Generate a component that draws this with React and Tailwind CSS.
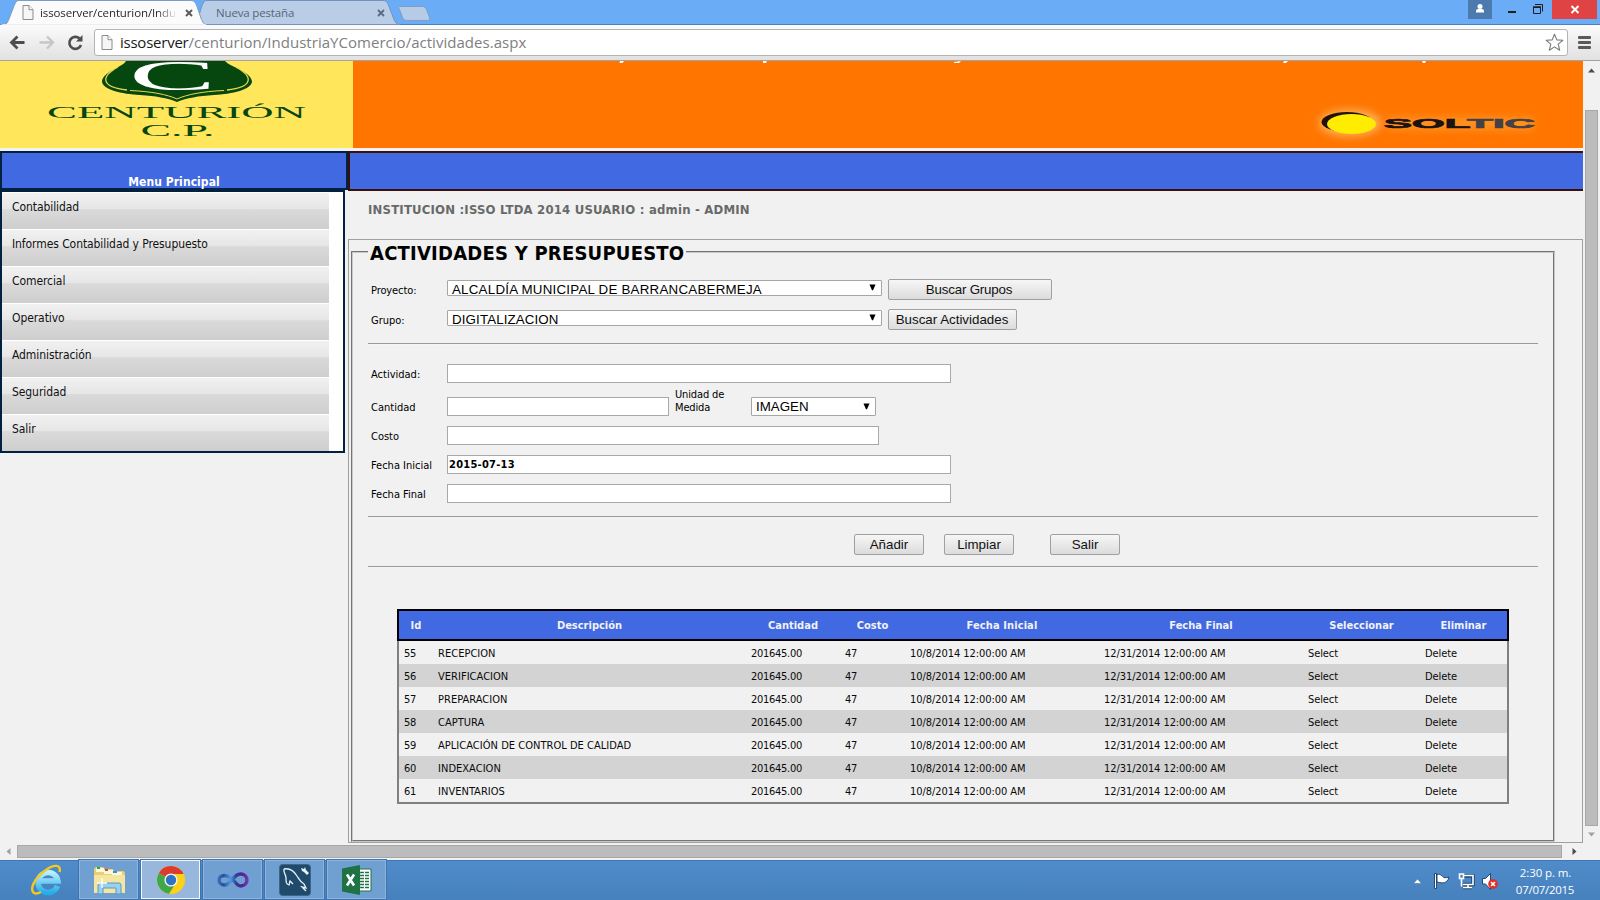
const menu = [
  "Contabilidad",
  "Informes Contabilidad y Presupuesto",
  "Comercial",
  "Operativo",
  "Administración",
  "Seguridad",
  "Salir",
];

const rows = [
  [55, "RECEPCION"],
  [56, "VERIFICACION"],
  [57, "PREPARACION"],
  [58, "CAPTURA"],
  [59, "APLICACIÓN DE CONTROL DE CALIDAD"],
  [60, "INDEXACION"],
  [61, "INVENTARIOS"],
];

const GRID = "grid grid-cols-[34px_313px_94px_65px_194px_204px_117px_87px]";

function PageIcon({ className }) {
  return (
    <svg className={className} width="12" height="15" viewBox="0 0 12 15">
      <path d="M1 .5h6l4 4.2v9.8H1z" fill="#f6f6f6" stroke="#8c8c8c" />
      <path d="M7 .5v4.2h4" fill="#fff" stroke="#8c8c8c" />
    </svg>
  );
}

function TabStrip() {
  return (
    <div className="relative h-[25px] bg-[#6aacf6]">
      <svg className="absolute inset-0" width="1600" height="25" viewBox="0 0 1600 25">
        <path d="M0 24.500h1600" stroke="#4a7fc0" />
        <path d="M190 24.500c6 0 6-2 8-6l4-13c2-4 2-5 5-5h175c4 0 5 1 7 6l5 13c2 4 3 5 6 5z" fill="#bacde6" stroke="#7292bd" />
        <path d="M399.500 6.500h23c2 0 3 1 4 3l3 8c0 2 0 3-2 3h-21c-2 0-3-1-4-3l-3-8c-1-2-1-3 0-3z" fill="#b5cbe6" stroke="#7f9cc2" />
        <path d="M0 25c6 0 7-1 9-6l5-13c2-5 3-5.500 6-5.500h170c4 0 5 1 7 6l4.500 13c2 4 3 5.500 6 5.500z" fill="#fbfbfb" stroke="#7b9cc6" />
        <path d="M2 25h204" stroke="#fbfbfb" strokeWidth="1.500" />
        <path d="M186 10l6 6m0-6l-6 6" stroke="#5a5a5a" strokeWidth="2" />
        <path d="M378 10l6 6m0-6l-6 6" stroke="#5b6a80" strokeWidth="1.800" />
        <path d="M1468 0h24v19h-24z" fill="#4b7aae" />
        <circle cx="1480" cy="6.500" r="2.500" fill="#fff" />
        <path d="M1476 12.500v-1.500q0-2 2-2h4q2 0 2 2v1.500z" fill="#fff" />
        <path d="M1508 11h8v2h-8z" fill="#1e1e1e" />
        <path d="M1533.500 7.500h7v6h-7z" fill="none" stroke="#1e1e1e" />
        <path d="M1533 7h8" stroke="#1e1e1e" strokeWidth="1.500" />
        <path d="M1535 4.500h7.500v7" fill="none" stroke="#1e1e1e" />
        <path d="M1552 0h45v19h-45z" fill="#e04343" />
        <path d="M1571.500 6l7 7m0-7l-7 7" stroke="#fff" strokeWidth="1.900" />
      </svg>
      <div className="relative flex h-[25px] items-center font-['Open_Sans',sans-serif] text-[11.5px]">
        <PageIcon className="ml-[22px]" />
        <span className="ml-[6px] w-[137px] overflow-hidden whitespace-nowrap bg-linear-to-r from-[#222] from-85% to-transparent bg-clip-text tracking-[-0.12px] text-transparent">
          issoserver/centurion/Indus
        </span>
        <span className="ml-[39px] tracking-[-0.16px] text-[#56657a]">Nueva pestaña</span>
      </div>
    </div>
  );
}

function Toolbar() {
  return (
    <div className="flex h-[36px] items-center border-b border-[#a3a3a3] bg-linear-to-b from-[#fbfbfb] to-[#e1e1e1]">
      <svg width="94" height="35" viewBox="0 0 94 35">
        <g fill="none" strokeWidth="2.800">
          <path d="M24.500 17.500H12M17.500 11.500l-6 6 6 6" stroke="#4d4d4d" />
          <path d="M39.500 17.500h13M47 11.500l6 6-6 6" stroke="#c6c6c6" strokeWidth="2.400" />
          <path d="M81 20a6 6 0 1 1-1.500-6.500" stroke="#4d4d4d" strokeWidth="2.600" />
        </g>
        <path d="M82.500 10v6.500H76z" fill="#4d4d4d" />
      </svg>
      <div className="mb-px flex h-[27px] w-[1474px] items-center rounded-[3px] border border-[#b4b4b4] bg-white">
        <PageIcon className="ml-[6px]" />
        <div className="ml-[7px] flex-1 font-['Open_Sans',sans-serif] text-[15px] leading-[24px]">
          <span className="tracking-[-0.24px] text-[#1a1a1a]">issoserver</span>
          <span className="tracking-[0.03px] text-[#808080]">/centurion/IndustriaYComercio/actividades.aspx</span>
        </div>
        <svg className="mr-[3px]" width="19" height="19" viewBox="0 0 19 19">
          <path d="M9.500 1.200l2.300 5.700 6 .4-4.600 3.900 1.500 6-5.200-3.300-5.200 3.300 1.500-6L1.200 7.300l6-.4z" fill="#fff" stroke="#7a7a7a" strokeWidth="1.100" strokeLinejoin="round" />
        </svg>
      </div>
      <div className="ml-[10px] flex flex-col gap-[2px]">
        <div className="h-[3px] w-[13px] rounded-[1px] bg-[#5a5a5a]" />
        <div className="h-[3px] w-[13px] rounded-[1px] bg-[#5a5a5a]" />
        <div className="h-[3px] w-[13px] rounded-[1px] bg-[#5a5a5a]" />
      </div>
    </div>
  );
}

function Banner() {
  return (
    <div className="flex h-[87px]">
      <svg className="bg-[#ffe65a]" width="353" height="87" viewBox="0 0 353 87">
        <path d="M126 0C123 6 104 10 102 20c0 9 20 13 38 14 16 1 27 3 37 7 10-4 21-6 37-7 18-1 38-5 38-14-2-10-22-14-27-20z" fill="#06470f" />
        <path d="M118 6c-18 10-17 20 9 23M236 6c18 10 17 20-9 23" fill="none" stroke="#e6d850" strokeWidth="1.300" />
        <path d="M130 29.500c22 1 37 4 47 8.500 10-4.500 25-7.500 47-8.500" fill="none" stroke="#e6d850" strokeWidth="1" />
        <text x="129" y="28.500" textLength="87" lengthAdjust="spacingAndGlyphs" className="fill-white font-['Liberation_Serif',serif] text-[43px]">C</text>
        <text x="47" y="57" textLength="259" lengthAdjust="spacingAndGlyphs" className="fill-[#06470f] font-['Liberation_Serif',serif] text-[17px]">CENTURIÓN</text>
        <text x="140.500" y="75" textLength="74" lengthAdjust="spacingAndGlyphs" className="fill-[#06470f] font-['Liberation_Serif',serif] text-[16.5px]">C.P.</text>
      </svg>
      <svg className="bg-[#ff7500]" width="1230" height="87" viewBox="353 0 1230 87">
        <defs>
          <filter id="glow" x="-30%" y="-80%" width="160%" height="260%">
            <feGaussianBlur stdDeviation="4" />
          </filter>
        </defs>
        <g fill="#fff">
          <path d="M620 0h4l-1.500 2h-3zM763 0h4l-1 2h-3zM954 1l7-1-2 2h-5zM1284 0h4l-2 2h-3zM1422 0h4l-1 2h-2z" />
        </g>
        <g filter="url(#glow)">
          <ellipse cx="1350" cy="62" rx="31" ry="13" fill="#ffb45c" />
          <path d="M1388 57h145v11h-145z" fill="#ff9526" />
        </g>
        <ellipse cx="1347" cy="61" rx="25.500" ry="10" fill="#21130a" />
        <ellipse cx="1351.500" cy="63" rx="24.500" ry="10" fill="#ffec00" />
        <text x="1384" y="67.300" textLength="151" lengthAdjust="spacingAndGlyphs" className="fill-[#1c1310] stroke-[#1c1310] stroke-[0.7] font-['Liberation_Sans',sans-serif] text-[13px] font-bold">
          SOL<tspan className="fill-[#444044] stroke-[#444044]">TIC</tspan>
        </text>
      </svg>
    </div>
  );
}

function SideMenu() {
  return (
    <div className="w-[348px] shrink-0">
      <div className="flex h-[39px] items-end justify-center border-2 border-[#00213f] bg-[#4169e1] text-[12px] leading-[11px] font-bold tracking-[0.06px] text-white">
        Menu Principal
      </div>
      <div className="h-[263px] w-[345px] border-2 border-[#00213f] bg-white">
        {menu.map((m) => (
          <div
            key={m}
            className="h-[37px] w-[327px] border-t border-white bg-linear-[180deg,#f1f1f1_0%,#e6e6e6_45%,#dadada_46%,#cecece_100%] pt-[7px] pl-[10px] text-[12px] leading-[15px] tracking-[-0.08px] text-[#111]"
          >
            {m}
          </div>
        ))}
      </div>
    </div>
  );
}

function Select({ className, textClass = "", children }) {
  return (
    <div className={`flex items-center justify-between rounded-[1px] border border-[#a6a6a6] bg-white pr-[5px] pl-[4px] font-['Liberation_Sans',sans-serif] text-[13.33px] leading-[15px] whitespace-nowrap text-black ${className}`}>
      <span className={textClass}>{children}</span>
      <svg className="-mt-px" width="7" height="7" viewBox="0 0 7 7">
        <path d="M.5 .5h6L4 6.300H3z" fill="#000" />
      </svg>
    </div>
  );
}

function Button({ className, children }) {
  return (
    <button className={`flex h-[21px] items-center justify-center rounded-[2px] border border-[#a0a0a0] bg-linear-to-b from-[#f6f6f6] to-[#dcdcdc] font-['Liberation_Sans',sans-serif] text-[13.33px] leading-none whitespace-nowrap text-[#111] ${className}`}>
      {children}
    </button>
  );
}

function Field({ className, children }) {
  return <div className={`h-[19px] border border-[#a9a9a9] bg-white pl-px text-[11px] leading-[18px] font-bold tracking-[0.25px] ${className}`}>{children}</div>;
}

function Label({ className, children }) {
  return <div className={`w-[79px] shrink-0 pl-[3px] text-[11px] leading-[13px] ${className}`}>{children}</div>;
}

function Rule({ className }) {
  return <div className={`h-[2px] border-t border-b border-t-[#9a9a9a] border-b-[#f4f4f4] ${className}`} />;
}

function Form() {
  return (
    <fieldset className="ml-[2px] h-[602px] w-[1204px] border-2 border-[#c8c8c8] px-[15px] [border-style:groove]">
      <legend className="h-[24px] px-[2px] text-[20px] leading-[26px] font-bold tracking-[0.22px] whitespace-nowrap text-black">
        ACTIVIDADES Y PRESUPUESTO
      </legend>
      <div className="mt-[15px] flex h-[21px]">
        <Label className="pt-[5px] tracking-[-0.1px]">Proyecto:</Label>
        <Select className="mt-px h-[16px] w-[435px] tracking-[0.23px]" textClass="pt-[3px]">ALCALDÍA MUNICIPAL DE BARRANCABERMEJA</Select>
        <Button className="ml-[6px] w-[164px] pr-[2px] tracking-[-0.2px]">Buscar Grupos</Button>
      </div>
      <div className="mt-[9px] flex h-[21px]">
        <Label className="pt-[5px]">Grupo:</Label>
        <Select className="mt-px h-[16px] w-[435px] tracking-[0.12px]" textClass="pt-[3px]">DIGITALIZACION</Select>
        <Button className="ml-[6px] w-[129px] pr-px">Buscar Actividades</Button>
      </div>
      <Rule className="mt-[13px]" />
      <div className="mt-[19px] flex h-[19px]">
        <Label className="pt-[4px]">Actividad:</Label>
        <Field className="w-[504px]" />
      </div>
      <div className="mt-[14px] flex h-[19px]">
        <Label className="pt-[4px]">Cantidad</Label>
        <Field className="w-[222px]" />
        <div className="-mt-[9px] w-[82px] pl-[6px] text-[11px] leading-[13px] tracking-[-0.14px]">
          Unidad de
          <br />
          Medida
        </div>
        <Select className="h-[19px] w-[125px]">IMAGEN</Select>
      </div>
      <div className="mt-[10px] flex h-[19px]">
        <Label className="pt-[4px]">Costo</Label>
        <Field className="w-[432px]" />
      </div>
      <div className="mt-[10px] flex h-[19px]">
        <Label className="pt-[4px]">Fecha Inicial</Label>
        <Field className="w-[504px]">2015-07-13</Field>
      </div>
      <div className="mt-[10px] flex h-[19px]">
        <Label className="pt-[4px]">Fecha Final</Label>
        <Field className="w-[504px]" />
      </div>
      <Rule className="mt-[13px]" />
      <div className="mt-[16px] ml-[486px] flex">
        <Button className="w-[70px]">Añadir</Button>
        <Button className="ml-[20px] w-[70px]">Limpiar</Button>
        <Button className="ml-[36px] w-[70px]">Salir</Button>
      </div>
      <Rule className="mt-[11px]" />
      <div className="mt-[41px] ml-[29px] w-[1112px] text-[11px]">
        <div className={`${GRID} h-[32px] border-2 border-black bg-[#4169e1] pt-px text-center leading-[28px] font-bold text-[#f2f2f2]`}>
          <span>Id</span>
          <span>Descripción</span>
          <span>Cantidad</span>
          <span>Costo</span>
          <span className="tracking-[0.1px]">Fecha Inicial</span>
          <span>Fecha Final</span>
          <span>Seleccionar</span>
          <span>Eliminar</span>
        </div>
        <div className="border-2 border-t-0 border-[#808080]">
          {rows.map(([id, name]) => (
            <div key={id} className={`${GRID} h-[23px] pt-px leading-[24px] text-[#0a0a0a] even:bg-[#d3d3d3] [&>span]:pl-[5px]`}>
              <span className="tracking-[-0.3px]">{id}</span>
              <span className="tracking-[0.03px]">{name}</span>
              <span className="tracking-[-0.28px]">201645.00</span>
              <span className="tracking-[-0.3px]">47</span>
              <span className="tracking-[-0.06px]">10/8/2014 12:00:00 AM</span>
              <span className="tracking-[-0.07px]">12/31/2014 12:00:00 AM</span>
              <span className="tracking-[-0.09px]">Select</span>
              <span className="tracking-[-0.09px]">Delete</span>
            </div>
          ))}
        </div>
      </div>
    </fieldset>
  );
}

function TaskButton({ className, children }) {
  return <div className={`mr-[3px] flex h-[39px] w-[59px] shrink-0 items-center justify-center border outline outline-[#3f74ae] ${className}`}>{children}</div>;
}

function Taskbar() {
  return (
    <div className="flex h-[40px] items-start bg-linear-to-b from-[#4f8cca] to-[#4681bd] text-white shadow-[inset_0_1px_0_#3f76b0]">
      <div className="flex w-[79px] justify-center pl-[14px]">
        <svg className="mt-[3px]" width="34" height="34" viewBox="0 0 34 34">
          <defs>
            <linearGradient id="ie" x1="0" y1="0" x2="0" y2="1">
              <stop offset="0" stopColor="#b9f0ff" />
              <stop offset="1" stopColor="#25aee8" />
            </linearGradient>
          </defs>
          <path d="M27.500 23A10 10 0 1 1 28 18H11" fill="none" stroke="url(#ie)" strokeWidth="5.500" />
          <path d="M29.500 9c2-8-6-8-15-1C5 15-1 26 4 30c2 1 5 0 7-1" fill="none" stroke="#f5c820" strokeWidth="2.400" />
        </svg>
      </div>
      <TaskButton className="border-[#8db4de] bg-[#709fd2]">
        <svg width="34" height="30" viewBox="0 0 34 30">
          <path d="M2 5q0-3 3-3h6l2 2h8l1 2h9q2 0 2 2v20H2z" fill="#e8cf74" />
          <path d="M4 3h8v4H4z" fill="#fff8d8" />
          <path d="M5 2h3v2H5z" fill="#1ab53c" />
          <path d="M12 5h9v4h-9z" fill="#fff8d8" />
          <path d="M13 4h3v2h-3z" fill="#e04428" />
          <path d="M20 7h10v4H20z" fill="#fff8d8" />
          <path d="M21 6h4v2h-4z" fill="#2593e8" />
          <path d="M2 10h31v18H2z" fill="#f6e59e" />
          <path d="M6 29V20q0-2 2-2h19q2 0 2 2v9h-5v-6H11v6z" fill="#9ad0ee" stroke="#4f9dcb" />
          <path d="M10 13v10M5 18h10" stroke="#fff" strokeWidth="1.300" />
        </svg>
      </TaskButton>
      <TaskButton className="border-[#f2f7fc] bg-[#97b7dd]">
        <svg width="28" height="28" viewBox="0 0 28 28">
          <circle cx="14" cy="14" r="14" fill="#fcd116" />
          <path d="M14 14L1.880 7A14 14 0 0 0 12 27.850L19.500 16z" fill="#3ea84b" />
          <path d="M14 14L1.880 7A14 14 0 0 1 26.600 8H14z" fill="#de3b2f" />
          <circle cx="14" cy="14" r="6.600" fill="#f3f3f3" />
          <circle cx="14" cy="14" r="5.200" fill="#2f74c4" />
        </svg>
      </TaskButton>
      <TaskButton className="border-[#8db4de] bg-[#709fd2]">
        <svg width="32" height="18" viewBox="0 0 32 18">
          <defs>
            <linearGradient id="vs" gradientUnits="userSpaceOnUse" x1="0" x2="32" y1="0" y2="0">
              <stop offset="0" stopColor="#3d78c8" />
              <stop offset=".2" stopColor="#2a4f9c" />
              <stop offset=".42" stopColor="#4f9be0" />
              <stop offset=".6" stopColor="#2d3f94" />
              <stop offset=".8" stopColor="#5a1f9a" />
              <stop offset="1" stopColor="#6a45b0" />
            </linearGradient>
          </defs>
          <path d="M17 10C13 6 11 4.500 7.500 4.500 4.500 4.500 2 6.300 2 9s2.500 5 5.500 5C14 14 16 3 23.500 3c3.700 0 6.500 2.500 6.500 6s-2.800 6-6.500 6c-2.500 0-4.500-2.500-6.500-5z" fill="none" stroke="url(#vs)" strokeWidth="3.500" />
        </svg>
      </TaskButton>
      <TaskButton className="border-[#8db4de] bg-[#709fd2]">
        <svg width="32" height="32" viewBox="0 0 32 32">
          <rect x=".5" y=".5" width="31" height="31" rx="3" fill="#1f4a6c" stroke="#3d6685" />
          <path d="M5 5c5-1 10 2 13 7 2 3 3 6 7 8l2 4-4-1 4 4M5 5c-1 4 2 5 2 9s0 6 3 7c1-1 0-3 1-4l3 3" fill="none" stroke="#e8f1f7" strokeWidth="1.300" />
          <path d="M22 4l1 3 2 1 3 3 2-2-3-3-1-3-1 2z" fill="#e8f1f7" />
        </svg>
      </TaskButton>
      <TaskButton className="border-[#8db4de] bg-[#709fd2]">
        <svg width="30" height="30" viewBox="0 0 30 30">
          <path d="M16 4h13v22H16z" fill="#fff" stroke="#1f7244" />
          <path d="M18 7.500h9M18 10.500h9M18 13.500h9M18 16.500h9M18 19.500h9M18 22.500h9" stroke="#1f7244" strokeWidth="1.500" />
          <path d="M22.500 5v20" stroke="#fff" />
          <path d="M0 3.500L18 0v30L0 26.500z" fill="#1f7244" />
          <path d="M5 9.500l7 11M12 9.500l-7 11" stroke="#fff" strokeWidth="2.600" />
        </svg>
      </TaskButton>
      <svg className="ml-auto" width="92" height="40" viewBox="1412 0 92 40">
        <path d="M1413.500 23.500l4-4.500 4 4.500z" fill="#fff" stroke="#3b6a9c" strokeWidth=".5" />
        <g stroke="#23476d" strokeWidth="1" fill="#fff">
          <path d="M1434.500 13.500h2v15h-2z" />
          <path d="M1437 14.500c4-1 5 2 7 3 1 .5 4 0 5-.5-1 4-3 6-7 6-2 0-3-1-5-1z" />
        </g>
        <path d="M1463 16h10v8.500h-10M1468 24v3M1463 27.500h9" fill="none" stroke="#23476d" strokeWidth="3.500" />
        <g fill="none" stroke="#fff" strokeWidth="1.600">
          <path d="M1464 15.500h9v9h-10M1468 24v3.500M1463 27.500h9" />
          <path d="M1459.500 14h4v4.500h-4zM1461.500 18.500v8" />
        </g>
        <path d="M1482.500 18.500h3l5-5v16l-5-5.500h-3z" fill="#fff" stroke="#23476d" />
        <circle cx="1493" cy="24" r="4.800" fill="#de2f26" />
        <path d="M1491 22l4 4m0-4l-4 4" stroke="#fff" strokeWidth="1.600" />
      </svg>
      <div className="w-[96px] pt-[4px] pr-[14px] text-center font-['Open_Sans',sans-serif] text-[11.5px] leading-[17px] tracking-[-0.27px]">
        <div className="pl-px tracking-[-0.1px]">2:30 p. m.</div>
        <div>07/07/2015</div>
      </div>
    </div>
  );
}

export default function App() {
  return (
    <div className="flex h-[900px] w-[1600px] flex-col overflow-hidden bg-[#f1f1f1] font-['DejaVu_Sans_Condensed','DejaVu_Sans',sans-serif] text-black">
      <TabStrip />
      <Toolbar />
      <div className="flex h-[782px]">
        <div className="w-[1583px]">
          <Banner />
          <div className="mt-[3px] flex">
            <SideMenu />
            <div className="flex-1">
              <div className="h-[40px] border-2 border-r-0 border-[#3a100a] bg-[#4169e1]" />
              <div className="h-[48px] pt-[11px] pl-[20px] text-[13px] leading-[16px] font-bold tracking-[0.2px] text-[#696969]">
                INSTITUCION :ISSO LTDA 2014 USUARIO : admin - ADMIN
              </div>
              <div className="h-[604px] border border-[#a0a0a0]">
                <Form />
              </div>
            </div>
          </div>
        </div>
        <div className="flex w-[17px] flex-col items-center bg-[#f1f1f1]">
          <svg className="mt-[7px]" width="7" height="5" viewBox="0 0 7 5">
            <path d="M0 4.500L3.500.5 7 4.500z" fill="#4d4d4d" />
          </svg>
          <div className="mt-[37px] h-[716px] w-[13px] border border-[#a8a8a8] bg-[#bcbcbc]" />
          <svg className="mt-[6px]" width="7" height="5" viewBox="0 0 7 5">
            <path d="M0 .5h7L3.500 4.500z" fill="#a0a0a0" />
          </svg>
        </div>
      </div>
      <div className="flex h-[17px] items-center bg-[#f1f1f1]">
        <svg className="ml-[6px]" width="5" height="7" viewBox="0 0 5 7">
          <path d="M4.500 0v7L.5 3.500z" fill="#a0a0a0" />
        </svg>
        <div className="ml-[6px] h-[13px] w-[1545px] border border-[#a8a8a8] bg-[#bcbcbc]" />
        <svg className="ml-[10px]" width="5" height="7" viewBox="0 0 5 7">
          <path d="M.5 0v7l4-3.500z" fill="#4d4d4d" />
        </svg>
      </div>
      <Taskbar />
    </div>
  );
}
